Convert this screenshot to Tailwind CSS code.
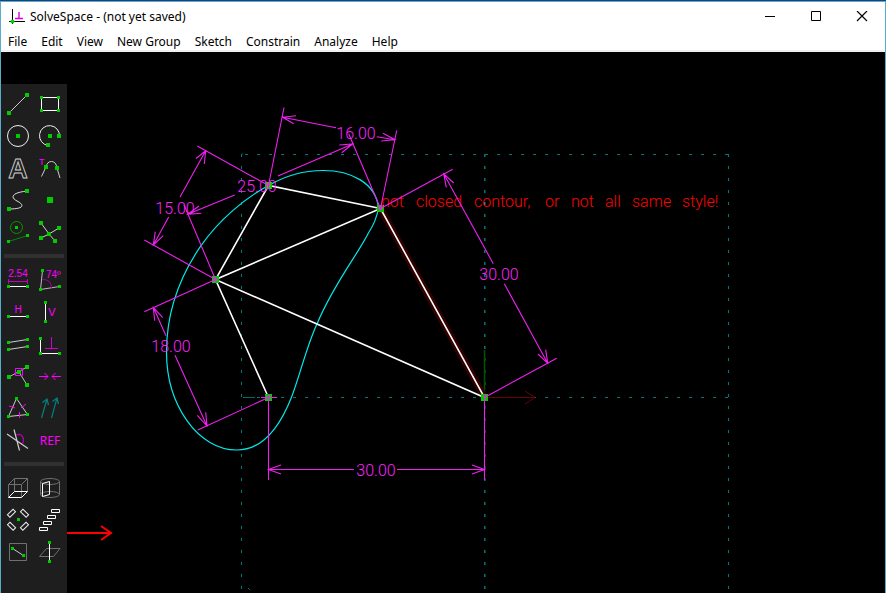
<!DOCTYPE html>
<html lang="en">
<head>
<meta charset="utf-8">
<title>SolveSpace - (not yet saved)</title>
<script src="https://cdn.jsdelivr.net/npm/@tailwindcss/browser@4"></script>
</head>
<body class="bg-white text-black font-['Noto_Sans',sans-serif] text-[12px] leading-4">
<div class="border-t border-[#1f3f7c]">
<div class="border-x border-t border-[#5aaccc]">
  <header class="flex h-[30px] items-stretch justify-between">
    <div class="flex items-center gap-[3px] pl-2">
      <svg class="size-[18px]" viewBox="0 0 18 18" fill="none" aria-hidden="true">
        <path d="M3.500 1V16M0 13.500H16" stroke="#000"/>
        <path d="M6 10.500H14M10 4V10" stroke="#e000e0" stroke-width="1.400"/>
        <circle cx="3.500" cy="13.500" r="2" fill="#00d000"/>
      </svg>
      <h1 class="whitespace-nowrap">SolveSpace - (not yet saved)</h1>
    </div>
    <div class="flex">
      <button type="button" aria-label="Minimize" class="grid w-[46px] place-items-center"><svg class="size-3" viewBox="0 0 12 12" fill="none" stroke="#000"><path d="M1 5.500H11"/></svg></button>
      <button type="button" aria-label="Maximize" class="grid w-[46px] place-items-center"><svg class="size-3" viewBox="0 0 12 12" fill="none" stroke="#000"><path d="M1.500 .5H10.500V9.500H1.500Z"/></svg></button>
      <button type="button" aria-label="Close" class="grid w-[46px] place-items-center"><svg class="size-3" viewBox="0 0 12 12" fill="none" stroke="#000" stroke-width="1.200"><path d="M1 0L11 10M11 0L1 10"/></svg></button>
    </div>
  </header>
  <nav class="flex h-5 items-end gap-[14px] border-b-2 border-[#f0f0f0] pl-[7px] whitespace-nowrap">
    <button type="button">File</button>
    <button type="button">Edit</button>
    <button type="button">View</button>
    <button type="button">New Group</button>
    <button type="button">Sketch</button>
    <button type="button">Constrain</button>
    <button type="button">Analyze</button>
    <button type="button">Help</button>
  </nav>
  <main class="flex bg-black">
    <aside aria-label="Tools" class="mt-8 w-[66px] shrink-0 bg-[#1e1e1e] px-px pt-1 font-['Liberation_Sans',sans-serif]">
      <div class="grid grid-cols-2">
        <button type="button" aria-label="Line segment" class="size-8"><svg class="size-8" viewBox="0 0 32 32" fill="none"><path d="M7 25L25 7" stroke="#ccc"/><path d="M5 23h4v4h-4zM23 5h4v4h-4z" fill="#00cc00"/></svg></button>
        <button type="button" aria-label="Rectangle" class="size-8"><svg class="size-8" viewBox="0 0 32 32" fill="none"><path d="M7.500 9.500H24.500V22.500H7.500Z" stroke="#fff"/><path d="M6 8h3v3h-3zM23 8h3v3h-3zM6 21h3v3h-3zM23 21h3v3h-3z" fill="#00cc00"/></svg></button>
        <button type="button" aria-label="Circle" class="size-8"><svg class="size-8" viewBox="0 0 32 32" fill="none"><circle cx="16" cy="16" r="10.500" stroke="#eee"/><path d="M14 14h4v4h-4z" fill="#00cc00"/></svg></button>
        <button type="button" aria-label="Arc" class="size-8"><svg class="size-8" viewBox="0 0 32 32" fill="none"><path d="M25.500 16A10 10 0 1 0 14 25.500" stroke="#eee"/><path d="M14 14h4v4h-4zM23 14h4v4h-4zM12 23h4v4h-4z" fill="#00cc00"/></svg></button>
        <button type="button" aria-label="Text" class="size-8"><svg class="size-8" viewBox="0 0 32 32"><text x="16" y="26" text-anchor="middle" class="text-[27px] font-bold" fill="none" stroke="#d0d0d0" stroke-width="0.900">A</text></svg></button>
        <button type="button" aria-label="Tangent arc" class="size-8"><svg class="size-8" viewBox="0 0 32 32" fill="none"><path d="M7.500 24.500L12 15M23 16L26 26M12 15Q13 9.500 17.500 9.500T23 16" stroke="#ccc"/><path d="M10 13h4v4h-4zM21 14h4v4h-4z" fill="#00cc00"/><text x="5" y="13" class="text-[9px]" fill="#ff00ff">T</text></svg></button>
        <button type="button" aria-label="Bezier spline" class="size-8"><svg class="size-8" viewBox="0 0 32 32" fill="none"><path d="M25 7C8 9 9 14 15 17C23 21 22 25 7 25" stroke="#ddd"/><path d="M23 5h4v4h-4zM5 23h4v4h-4z" fill="#00cc00"/></svg></button>
        <button type="button" aria-label="Point" class="size-8"><svg class="size-8" viewBox="0 0 32 32"><path d="M13 13h6v6h-6z" fill="#00cc00"/></svg></button>
        <button type="button" aria-label="Construction" class="size-8"><svg class="size-8" viewBox="0 0 32 32" fill="none"><circle cx="14.500" cy="11.500" r="6" stroke="#009900"/><path d="M6.500 25.500L25.500 19.500" stroke="#008800"/><path d="M13 10h3v3h-3zM5 24h3v3h-3zM24 18h3v3h-3z" fill="#00cc00"/></svg></button>
        <button type="button" aria-label="Split curves" class="size-8"><svg class="size-8" viewBox="0 0 32 32" fill="none"><path d="M7 7L15 18L21 25M25 12L15 18L7 22" stroke="#ccc"/><path d="M5 5h4v4h-4zM23 10h4v4h-4zM13 16h4v4h-4zM5 20h4v4h-4zM19 23h4v4h-4z" fill="#00cc00"/></svg></button>
      </div>
      <hr class="mx-[2px] my-[6px] h-1 border-0 bg-[#303030]">
      <div class="grid grid-cols-2">
        <button type="button" aria-label="Distance" class="size-8"><svg class="size-8" viewBox="0 0 32 32" fill="none"><text x="16" y="13" text-anchor="middle" class="text-[10px]" fill="#ff00ff">2.54</text><path d="M6.500 15V20M25.500 15V20M6 17.500H26" stroke="#c000c0"/><path d="M6 22.500H26" stroke="#fff"/><path d="M5 21h3v3h-3zM24 21h3v3h-3z" fill="#00cc00"/></svg></button>
        <button type="button" aria-label="Angle" class="size-8"><svg class="size-8" viewBox="0 0 32 32" fill="none"><path d="M8.500 6.500L6.500 25.500L25.500 22.500" stroke="#bbb"/><path d="M8.500 15.500Q17 15 17.500 24" stroke="#a000a0"/><path d="M7 5h3v3h-3zM5 24h3v3h-3zM24 21h3v3h-3z" fill="#00cc00"/><text x="12" y="14" class="text-[10px]" fill="#ff00ff">74º</text></svg></button>
        <button type="button" aria-label="Horizontal" class="size-8"><svg class="size-8" viewBox="0 0 32 32"><text x="16" y="17" text-anchor="middle" class="text-[10px]" fill="#ff00ff">H</text><path d="M6 20.500H26" stroke="#fff"/><path d="M5 19h3v3h-3zM24 19h3v3h-3z" fill="#00cc00"/></svg></button>
        <button type="button" aria-label="Vertical" class="size-8"><svg class="size-8" viewBox="0 0 32 32"><text x="18" y="20" text-anchor="middle" class="text-[11px]" fill="#ff00ff">V</text><path d="M11.500 6V26" stroke="#fff"/><path d="M10 5h3v3h-3zM10 24h3v3h-3z" fill="#00cc00"/></svg></button>
        <button type="button" aria-label="Parallel" class="size-8"><svg class="size-8" viewBox="0 0 32 32"><path d="M6.500 14.500L25.500 11.500M6.500 21.500L25.500 18.500" stroke="#ccc"/><path d="M5 13h3v3h-3zM24 10h3v3h-3zM5 20h3v3h-3zM24 17h3v3h-3z" fill="#00cc00"/></svg></button>
        <button type="button" aria-label="Perpendicular" class="size-8"><svg class="size-8" viewBox="0 0 32 32" fill="none"><path d="M6.500 10V25.500H26" stroke="#fff"/><path d="M17.500 9V20.500M11 20.500H24" stroke="#d000d0"/><path d="M5 9h3v3h-3zM5 24h3v3h-3zM24 24h3v3h-3z" fill="#00cc00"/></svg></button>
        <button type="button" aria-label="Point on line" class="size-8"><svg class="size-8" viewBox="0 0 32 32" fill="none"><path d="M7 17L25 7M17 12L25 25" stroke="#bbb"/><path d="M5 15h4v4h-4zM23 5h4v4h-4zM15 10h4v4h-4zM23 23h4v4h-4z" fill="#00cc00"/><path d="M13.500 8.500H20.500V15.500H13.500Z" stroke="#ff00ff"/></svg></button>
        <button type="button" aria-label="Symmetric" class="size-8"><svg class="size-8" viewBox="0 0 32 32" fill="none"><path d="M5 16.500H14M10.500 13L14 16.500L10.500 20M27 16.500H18M21.500 13L18 16.500L21.500 20" stroke="#ff00ff"/></svg></button>
        <button type="button" aria-label="Equal length" class="size-8"><svg class="size-8" viewBox="0 0 32 32" fill="none"><path d="M14.500 6.500L6.500 24.500L25.500 22.500Z" stroke="#ccc"/><path d="M7 14L13 16M19 16L24 12M17.500 20V26" stroke="#ff00ff"/><path d="M13 5h3v3h-3zM5 23h3v3h-3zM24 21h3v3h-3z" fill="#00cc00"/></svg></button>
        <button type="button" aria-label="Same orientation" class="size-8"><svg class="size-8" viewBox="0 0 32 32" fill="none"><path d="M7.500 26L13 7M8.500 10.500L13 7L14.500 13M17.500 26L23 6M18.500 9.500L23 6L24.500 12" stroke="#008080" stroke-width="1.200"/></svg></button>
        <button type="button" aria-label="Other angle" class="size-8"><svg class="size-8" viewBox="0 0 32 32" fill="none"><path d="M14 11C19 9 22 13 21.500 17Q21 20 19 20" stroke="#b000b0" stroke-width="1.200"/><path d="M5 10L26 24.500M12 5.500L17.500 26.500" stroke="#ccc" stroke-width="1.200"/></svg></button>
        <button type="button" aria-label="Reference dimension" class="size-8"><svg class="size-8" viewBox="0 0 32 32"><text x="16" y="21" text-anchor="middle" class="font-['Noto_Sans',sans-serif] text-[12px]" fill="#ff00ff">REF</text></svg></button>
      </div>
      <hr class="mx-[2px] my-[6px] h-1 border-0 bg-[#303030]">
      <div class="grid grid-cols-2">
        <button type="button" aria-label="Extrude" class="size-8"><svg class="size-8" viewBox="0 0 32 32" fill="none"><path d="M6.500 25.500V12.500H19.500V25.500M12.500 19.500V6.500H25.500V19.500M6.500 12.500L12.500 6.500M19.500 12.500L25.500 6.500" stroke="#707070"/><path d="M6.500 25.500H19.500L25.500 19.500H12.500Z" stroke="#fff"/></svg></button>
        <button type="button" aria-label="Lathe" class="size-8"><svg class="size-8" viewBox="0 0 32 32" fill="none"><path d="M6.500 9.500V22.500M25.500 9.500V22.500" stroke="#707070"/><ellipse cx="16" cy="9.500" rx="9.500" ry="3" stroke="#707070"/><ellipse cx="16" cy="22.500" rx="9.500" ry="3" stroke="#707070"/><path d="M8.500 11.500L15.500 9.500V22.500L8.500 24.500Z" stroke="#fff"/></svg></button>
        <button type="button" aria-label="Step rotating" class="size-8"><svg class="size-8" viewBox="0 0 32 32" fill="none"><g stroke="#eee"><rect x="5.500" y="7.500" width="8" height="3.500" transform="rotate(-45 9.500 9.300)"/><rect x="18.500" y="7.500" width="8" height="3.500" transform="rotate(45 22.500 9.300)"/><rect x="5.500" y="20.500" width="8" height="3.500" transform="rotate(45 9.500 22.300)"/><rect x="18.500" y="20.500" width="8" height="3.500" transform="rotate(-45 22.500 22.300)"/></g><path d="M15 14h3v3h-3z" fill="#00cc00"/></svg></button>
        <button type="button" aria-label="Step translating" class="size-8"><svg class="size-8" viewBox="0 0 32 32" fill="none"><path d="M17.500 5.500h8v3h-8zM13.500 11.500h8v3h-8zM9.500 17.500h8v3h-8zM5.500 23.500h8v3h-8z" stroke="#fff"/></svg></button>
        <button type="button" aria-label="Sketch in workplane" class="size-8"><svg class="size-8" viewBox="0 0 32 32" fill="none"><path d="M7.500 7.500H24.500V24.500H7.500Z" stroke="#707070"/><path d="M10.500 12.500L21.500 19.500" stroke="#ccc"/><path d="M9 11h3v3h-3zM20 18h3v3h-3z" fill="#00cc00"/></svg></button>
        <button type="button" aria-label="Sketch in 3D" class="size-8"><svg class="size-8" viewBox="0 0 32 32" fill="none"><path d="M5.500 20.500L12.500 12.500H26L19.500 20.500Z" stroke="#707070"/><path d="M15.500 6V26" stroke="#fff"/><path d="M14 5h3v3h-3zM14 24h3v3h-3z" fill="#00cc00"/></svg></button>
      </div>
    </aside>
    <svg class="h-auto min-w-0 flex-1 font-['Roboto',sans-serif] font-light" viewBox="67 52 818 541" fill="none" role="img" aria-label="Sketch">
      <!-- workplanes -->
      <g stroke="#007a7a" stroke-dasharray="3 9">
        <path d="M241.500 154V592"/><path d="M484.800 154V592" stroke-width="1.500"/><path d="M728.500 154V592"/>
        <path d="M245 154.500H729"/><path d="M245 397.500H729"/>
      </g>
      <path d="M243 397.500H255M248 588L250 590M241.500 154H243" stroke="#006a6a"/>
      <!-- axes -->
      <path d="M484.500 350V397" stroke="#005400" stroke-width="1.500"/>
      <path d="M485 397.500H535M525 391L535 397.500L525 404" stroke="#6a0000"/>
      <!-- highlighted open edge -->
      <path d="M380.500 208.500L484.500 397.500" stroke="#330000" stroke-width="7"/>
      <!-- spline -->
      <path d="M378.500 208C376 183 351 170.500 323 170.500C303 170.500 285 176 268.500 185.500C245 198 219 220 201 245.700C178 279 166.500 316 166.500 352C166.500 405 198 450 237 450C265 450 281 424 291.700 396.700C300 375 307 345 317.300 323.300C333 285 358 254 368.300 233.300C373 226 377 217 378.500 208" stroke="#00eaea" stroke-width="1.200"/>
      <!-- sketch lines -->
      <path d="M380.500 208.500L268.500 185.500L215.500 279.500L380.500 208.500L484.500 397.500L215.500 279.500L268.500 397.500" stroke="#fff" stroke-width="1.600"/>
      <path d="M265 182h7v7h-7zM377 205h7v7h-7zM212 276h7v7h-7zM265 394h7v7h-7zM481 394h7v7h-7z" fill="#00cc00"/>
      <!-- error message -->
      <text y="207" class="text-[16px]" fill="#ff0000"><tspan x="381">not</tspan> <tspan x="416">closed</tspan> <tspan x="474">contour,</tspan> <tspan x="545">or</tspan> <tspan x="571">not</tspan> <tspan x="605">all</tspan> <tspan x="632">same</tspan> <tspan x="682">style!</tspan></text>
      <!-- dimensions -->
      <g stroke="#f020f0" stroke-width="1.100">
        <path d="M268.500 185.500L284 107.500M380.500 208.500L396.700 130.500M282.700 117.300L336 127.700M376.700 136.700L395 139.700M296 115.700L282.700 117.300L293.700 123.700M383 133.300L395 139.700L381.300 141"/>
        <path d="M380.500 208.500L348.700 133.700M215.500 279.500L184 204.700M352.700 144L278 176M234.700 195L187.700 214.300M339.300 145L352.700 144L341.700 152.700M199 206L187.700 214.300L201.300 213.300"/>
        <path d="M268.500 185.500L197.300 146M215.500 279.500L144.300 240M205.700 150.700L180 197M168.700 217L153.300 245M196 158.500L205.700 150.700L204.300 164M155.300 231.700L153.300 245L163.300 235.700"/>
        <path d="M215.500 279.500L144.300 311.700M268.500 397.500L197.700 430M153.300 307.300L166 335.700M175 355.300L207 426M154.700 320.700L153.300 307.300L162.700 317.700M197.300 415.300L207 426L205.700 412.300"/>
        <path d="M380.500 208.500L452.700 169.300M484.500 397.500L556.700 358.300M443.700 173.700L493.300 263.700M504.300 283.700L547.700 363.300M446.300 187.300L443.700 173.700L453.700 183M538 354L547.700 363.300L545.700 349.700"/>
        <path d="M261 397.500H277M268.500 394V480M484.500 394V480M268.500 469.500H354M397 469.500H484.500M281 465L268.500 469.500L281 474M472 465L484.500 469.500L472 474"/>
        <path d="M379.500 207.500h2v2h-2zM214.500 278.500h2v2h-2z"/>
      </g>
      <g class="text-[16px]" fill="#ff22ff" text-anchor="middle">
        <text x="356" y="139">16.00</text>
        <text x="257" y="192">25.00</text>
        <text x="175" y="214">15.00</text>
        <text x="171" y="352">18.00</text>
        <text x="499" y="280">30.00</text>
        <text x="376" y="476">30.00</text>
      </g>
      <!-- pointer towards the workplane tool -->
      <path d="M67 533H111M101 526L111 533L101 540" stroke="#ff0000" stroke-width="2"/>
    </svg>
  </main>
</div>
</div>
</body>
</html>
